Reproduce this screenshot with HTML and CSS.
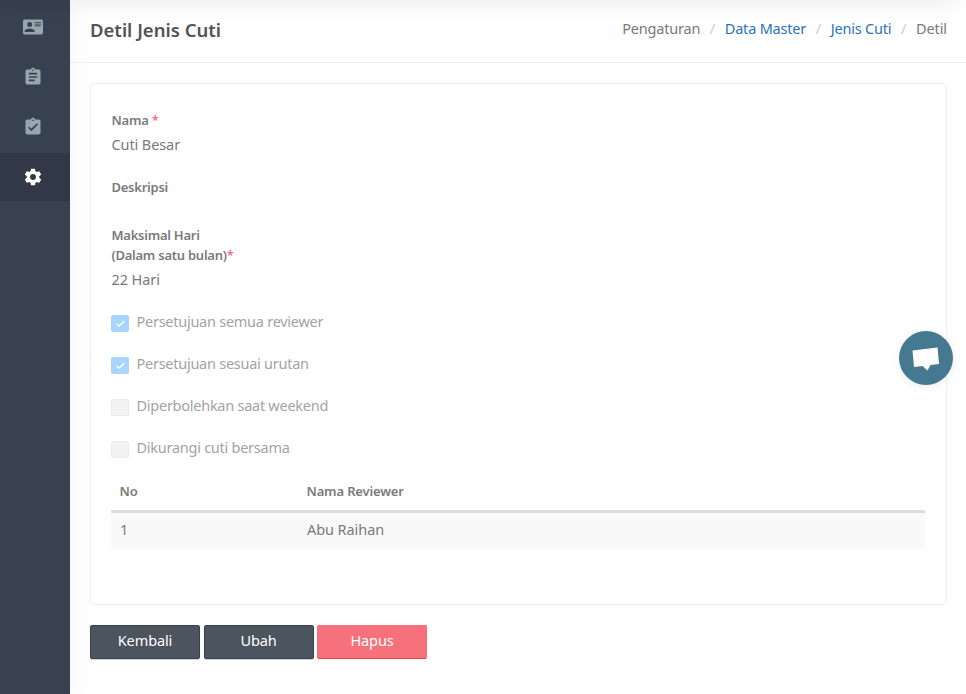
FILE: index.html
```html
<!DOCTYPE html>
<html lang="id">
<head>
<meta charset="utf-8">
<title>Detil Jenis Cuti</title>
<link rel="stylesheet" href="styles.css">
</head>
<body>
<div class="app">
  <nav class="sidebar">
    <a class="nav-item"><svg viewBox="0 0 24 24"><path d="M2,3H22C23.05,3 24,3.95 24,5V19C24,20.05 23.05,21 22,21H2C0.95,21 0,20.05 0,19V5C0,3.95 0.95,3 2,3M14,6V7H22V6H14M14,8V9H22V8H14M14,10V11H21V10H14M8,13.91C6,13.91 2,15 2,17V18H14V17C14,15 10,13.91 8,13.91M8,6A3,3 0 0,0 5,9A3,3 0 0,0 8,12A3,3 0 0,0 11,9A3,3 0 0,0 8,6Z"/></svg></a>
    <a class="nav-item"><svg viewBox="0 0 24 24"><path d="M19 3h-4.18C14.4 1.84 13.3 1 12 1c-1.3 0-2.4.84-2.82 2H5c-1.1 0-2 .9-2 2v14c0 1.1.9 2 2 2h14c1.1 0 2-.9 2-2V5c0-1.1-.9-2-2-2zm-7 0c.55 0 1 .45 1 1s-.45 1-1 1-1-.45-1-1 .45-1 1-1zm2 14H7v-2h7v2zm3-4H7v-2h10v2zm0-4H7V7h10v2z"/></svg></a>
    <a class="nav-item"><svg viewBox="0 0 24 24"><path d="M19 3h-4.18C14.4 1.84 13.3 1 12 1c-1.3 0-2.4.84-2.82 2H5c-1.1 0-2 .9-2 2v14c0 1.1.9 2 2 2h14c1.1 0 2-.9 2-2V5c0-1.1-.9-2-2-2zm-7 0c.55 0 1 .45 1 1s-.45 1-1 1-1-.45-1-1 .45-1 1-1zm-2 14l-4-4 1.41-1.41L10 14.17l6.59-6.59L18 9l-8 8z"/></svg></a>
    <a class="nav-item active"><svg viewBox="0 0 24 24"><path d="M12,15.5A3.5,3.5 0 0,1 8.5,12A3.5,3.5 0 0,1 12,8.5A3.5,3.5 0 0,1 15.5,12A3.5,3.5 0 0,1 12,15.5M19.43,12.97C19.47,12.65 19.5,12.33 19.5,12C19.5,11.67 19.47,11.34 19.43,11L21.54,9.37C21.73,9.22 21.78,8.95 21.66,8.73L19.66,5.27C19.54,5.05 19.27,4.96 19.05,5.05L16.56,6.05C16.04,5.66 15.5,5.32 14.87,5.07L14.5,2.42C14.46,2.18 14.25,2 14,2H10C9.75,2 9.54,2.18 9.5,2.42L9.13,5.07C8.5,5.32 7.96,5.66 7.44,6.05L4.95,5.05C4.73,4.96 4.46,5.05 4.34,5.27L2.34,8.73C2.21,8.95 2.27,9.22 2.46,9.37L4.57,11C4.53,11.34 4.5,11.67 4.5,12C4.5,12.33 4.53,12.65 4.57,12.97L2.46,14.63C2.27,14.78 2.21,15.05 2.34,15.27L4.34,18.73C4.46,18.95 4.73,19.03 4.95,18.95L7.44,17.94C7.96,18.34 8.5,18.68 9.13,18.93L9.5,21.58C9.54,21.82 9.75,22 10,22H14C14.25,22 14.46,21.82 14.5,21.58L14.87,18.93C15.5,18.67 16.04,18.34 16.56,17.94L19.05,18.95C19.27,19.03 19.54,18.95 19.66,18.73L21.66,15.27C21.78,15.05 21.73,14.78 21.54,14.63L19.43,12.97Z"/></svg></a>
  </nav>
  <main class="main">
    <header class="page-header">
      <h1>Detil Jenis Cuti</h1>
      <ol class="breadcrumb">
        <li>Pengaturan</li><li><a>Data Master</a></li><li><a>Jenis Cuti</a></li><li>Detil</li>
      </ol>
    </header>
    <section class="card">
      <div class="field">
        <div class="label">Nama <span class="req">*</span></div>
        <div class="value">Cuti Besar</div>
      </div>
      <div class="field empty"><div class="label">Deskripsi</div></div>
      <div class="field">
        <div class="label">Maksimal Hari<br>(Dalam satu bulan)<span class="req">*</span></div>
        <div class="value">22 Hari</div>
      </div>
      <div class="check"><span class="box on"><svg viewBox="0 0 18 18"><path d="M5.5 9.5l2.4 2.3 5.6-5.3"/></svg></span><span>Persetujuan semua reviewer</span></div>
      <div class="check"><span class="box on"><svg viewBox="0 0 18 18"><path d="M5.5 9.5l2.4 2.3 5.6-5.3"/></svg></span><span>Persetujuan sesuai urutan</span></div>
      <div class="check"><span class="box"></span><span>Diperbolehkan saat weekend</span></div>
      <div class="check"><span class="box"></span><span>Dikurangi cuti bersama</span></div>
      <table>
        <thead><tr><th class="col-no">No</th><th>Nama Reviewer</th></tr></thead>
        <tbody><tr><td>1</td><td>Abu Raihan</td></tr></tbody>
      </table>
    </section>
    <div class="actions">
      <button>Kembali</button><button>Ubah</button><button class="danger">Hapus</button>
    </div>
  </main>
</div>
<div class="top-shadow"></div>
<div class="chat"><svg viewBox="0 0 54 54"><path d="M13.5 19.5L38.5 16.5L40 33L31.5 34L28.5 39.5L23.5 35L15 36Z"/></svg></div>
</body>
</html>
```
FILE: styles.css
```css
* { box-sizing: border-box; }
body { margin: 0; height: 694px; overflow: hidden; background: #fefefe; color: #7a7a7a; font: 14.5px/20px "Noto Sans", sans-serif; }
.app { display: flex; height: 694px; }
.sidebar { width: 70px; flex: none; padding-top: 3px; background: #38414f; display: flex; flex-direction: column; gap: 2px; box-shadow: 0 0 20px rgba(0,0,0,.05); }
.nav-item { height: 48px; padding: 0 4px 0 0; display: flex; align-items: center; justify-content: center; }
.nav-item:first-child { padding: 0 4px 1px 0; }
.nav-item svg { width: 20px; height: 20px; fill: #98a6ad; }
.nav-item.active { background: #323946; }
.nav-item.active svg { fill: #fff; }
.main { flex: 1; }
.page-header { height: 63px; border-bottom: 1px solid #f0f0f0; padding: 0 19px 0 20px; display: flex; justify-content: space-between; align-items: center; }
h1 { margin: 0 0 2px; color: #505458; font: 600 18.5px/30px "Noto Sans", sans-serif; }
.breadcrumb { margin: 0 0 6px; padding: 0; list-style: none; display: flex; letter-spacing: -.2px; }
.breadcrumb li + li::before { content: "/"; color: #ccc; padding: 0 9.8px 0 9.6px; }
.breadcrumb li:last-child { letter-spacing: -.1px; }
.breadcrumb a { color: #2a74b8; }
.card { margin: 20px 19px 0 20px; height: 522px; border: 1px solid #f0f0f0; border-radius: 5px; padding: 26px 20px 0; background: #fff; box-shadow: 0 0 1px 1px rgba(0,0,0,.01); }
.label { font-weight: 600; font-size: 13px; line-height: 20px; letter-spacing: -.25px; padding-left: .5px; }
.req { color: #f76c78; }
.value { line-height: 20px; margin-top: 4px; letter-spacing: -.1px; padding-left: .5px; }
.field { margin-bottom: 23px; }
.field.empty { height: 25px; }
.check { display: flex; gap: 7.5px; height: 20px; margin-bottom: 22px; color: #a3a3a3; letter-spacing: -.26px; }
.field + .check { margin-top: -1px; }
.box { width: 18px; height: 17px; margin-top: 4px; border-radius: 2px; background: #f2f2f2; border: 1px solid #ebebeb; }
.box.on { background: #a9d4fe; border: 0; }
.box svg { display: block; width: 18px; height: 17px; fill: none; stroke: #fff; stroke-width: 1.5; }
table { width: 814px; border-collapse: collapse; margin-top: -5px; }
th { height: 37px; text-align: left; font-weight: 600; font-size: 13px; letter-spacing: -.15px; padding: 0 8px 1px 8.5px; border-bottom: 3px solid #dcdcdc; }
.col-no { width: 187px; }
td { height: 38px; padding: 0 9px 3px; background: #f9f9f9; letter-spacing: -.08px; }
.actions { display: flex; gap: 3.5px; padding: 20px; }
button { width: 110px; height: 34px; padding: 0 0 4px; border: 1px solid #38424f; border-radius: 2px; background: #4c5460; color: #fff; font: 14.5px/20px "Noto Sans", sans-serif; letter-spacing: -.1px; box-shadow: 0 1px 1px rgba(56,66,79,.25); }
button.danger { background: #f7717d; border-color: #f7717d; border-bottom-color: #f5384a; box-shadow: none; }
.top-shadow { position: absolute; top: -10px; left: 0; width: 956px; height: 10px; box-shadow: 0 0 20px rgba(0,0,0,.12); }
.chat { position: absolute; left: 899px; top: 331px; width: 54px; height: 54px; border-radius: 50%; background: #447991; box-shadow: 0 2px 10px rgba(0,0,0,.08); }
.chat svg { display: block; fill: #fff; }
```
